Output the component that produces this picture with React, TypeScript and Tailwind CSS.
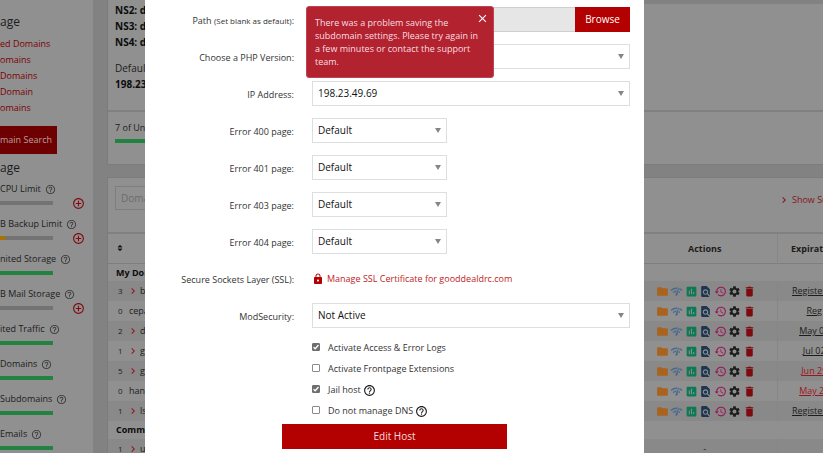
import React from "react";
import {
  MdAddCircleOutline,
  MdAssessment,
  MdChevronRight,
  MdClose,
  MdDelete,
  MdFindInPage,
  MdFolder,
  MdHelpOutline,
  MdHistory,
  MdLock,
  MdNetworkCheck,
  MdSettings,
} from "react-icons/md";
import { FaSort } from "react-icons/fa";

type Meter = { label: string; fill: string; bar: string; plus?: boolean };

const links = ["ed Domains", "omains", "Domains", "Domain", "omains"];

const meters: Meter[] = [
  { label: "CPU Limit", fill: "w-0", bar: "", plus: true },
  { label: "B Backup Limit", fill: "w-[5px]", bar: "bg-[#a87400]", plus: true },
  { label: "nited Storage", fill: "w-full", bar: "bg-[#22823f]" },
  { label: "B Mail Storage", fill: "w-0", bar: "", plus: true },
  { label: "ited Traffic", fill: "w-full", bar: "bg-[#22823f]" },
  { label: "Domains", fill: "w-full", bar: "bg-[#22823f]" },
  { label: "Subdomains", fill: "w-full", bar: "bg-[#22823f]" },
  { label: "Emails", fill: "w-full", bar: "bg-[#22823f]" },
];

type Host = { count: number; name: string; open: boolean; date: string; late?: boolean };

const hosts: Host[] = [
  { count: 3, name: "b", open: true, date: "Registered" },
  { count: 0, name: "cepa", open: false, date: "Reg" },
  { count: 2, name: "d", open: true, date: "May 05" },
  { count: 1, name: "g", open: true, date: "Jul 02" },
  { count: 5, name: "g", open: true, date: "Jun 29", late: true },
  { count: 0, name: "hand", open: false, date: "May 25", late: true },
  { count: 1, name: "ls", open: true, date: "Registered" },
];

const actions = [
  { label: "Files", icon: MdFolder, tint: "text-[#a8641f]" },
  { label: "Network", icon: MdNetworkCheck, tint: "text-[#4a6a8c]" },
  { label: "Statistics", icon: MdAssessment, tint: "text-[#0b7a55]" },
  { label: "Inspect", icon: MdFindInPage, tint: "text-[#1d3550]" },
  { label: "History", icon: MdHistory, tint: "text-[#9c1455]" },
  { label: "Settings", icon: MdSettings, tint: "text-[#1c1c1c]" },
  { label: "Delete", icon: MdDelete, tint: "text-[#7d0a0e]" },
];

function Sidebar() {
  return (
    <aside className="w-[93px] shrink-0 overflow-hidden whitespace-nowrap bg-[#909090] text-[9px] text-[#1c1c1c]">
      <h2 className="mt-3.5 text-[12px] leading-4">age</h2>
      <nav className="mt-1.5 flex flex-col text-[9px] leading-4 text-[#7c0006]">
        {links.map((link, i) => (
          <a key={i} href="#domains">{link}</a>
        ))}
      </nav>
      <button className="mt-2.5 h-7 w-[57px] bg-[#6e0002] text-left text-[9px] text-[#b9a0a0]">main Search</button>
      <h2 className="mt-1.5 text-[12px] leading-4">age</h2>
      <ul className="mt-1.5">
        {meters.map((m) => (
          <li key={m.label} className="h-[35px]">
            <div className="flex h-3.5 items-center gap-1">
              {m.label}
              <MdHelpOutline size={11} className="text-[#3c3c3c]" />
            </div>
            <div className="flex h-3.5 items-center">
              <div className="h-1 w-[53px] bg-[#737373]">
                <div className={`h-full ${m.fill} ${m.bar}`} />
              </div>
              {m.plus && (
                <button aria-label={`Increase ${m.label}`} className="ml-[19px] text-[#820a12]">
                  <MdAddCircleOutline size={13} />
                </button>
              )}
            </div>
          </li>
        ))}
      </ul>
    </aside>
  );
}

function CountCell({ count, name, open }: { count: number; name: string; open: boolean }) {
  return (
    <div className="flex items-center pl-2.5">
      <span className="w-[11px] text-[8px]">{count}</span>
      {open && <MdChevronRight size={12} className="-ml-0.5 mr-px text-[#96141c]" />}
      <span>{name}</span>
    </div>
  );
}

function HostTable() {
  return (
    <table className="w-[calc(100%+28px)] table-fixed border-t-2 border-[#808080] text-[9px] text-[#1c1c1c]">
      <thead>
        <tr className="h-[30px] border-b border-[#7e7e7e]">
          <th className="pl-2 text-left"><FaSort size={8} aria-label="Sort" /></th>
          <th className="w-36 border-r border-[#868686]">Actions</th>
          <th className="w-[74px]">Expiration</th>
        </tr>
      </thead>
      <tbody>
        <tr className="h-[18px]"><th colSpan={3} className="pl-2 text-left text-[#0c0c0c]">My Domains</th></tr>
        {hosts.map((h, i) => (
          <tr key={i} className="h-5 odd:bg-[#909090] even:bg-[#898989]">
            <td><CountCell {...h} /></td>
            <td className="border-r border-[#868686] pl-0.5">
              <div className="mx-auto flex w-[100px] justify-between">
                {actions.map(({ label, icon: Icon, tint }) => (
                  <button key={label} aria-label={label} className={tint}>
                    <Icon size={13} />
                  </button>
                ))}
              </div>
            </td>
            <td className="text-center">
              <a href="#expiration" className={h.late ? "text-[#a0141c] underline" : "underline"}>{h.date}</a>
            </td>
          </tr>
        ))}
        <tr className="h-[18px]"><th colSpan={3} className="pl-2 text-left text-[#0c0c0c]">Common</th></tr>
        <tr className="h-5 bg-[#898989]">
          <td><CountCell count={1} name="u" open /></td>
          <td className="border-r border-[#868686] text-center">-</td>
          <td />
        </tr>
      </tbody>
    </table>
  );
}

function Dashboard() {
  return (
    <main className="ml-3.5 min-w-0 flex-1 overflow-hidden text-[#1c1c1c]">
      <section className="border-b border-l border-[#7c7c7c] bg-[#909090]">
        <div className="flex h-[110px]">
          <div className="w-1/2 pl-[7px] pt-0.5 text-[10px] leading-4">
            <p className="font-bold text-[#0c0c0c]">NS2: d</p>
            <p className="font-bold text-[#0c0c0c]">NS3: d</p>
            <p className="font-bold text-[#0c0c0c]">NS4: d</p>
            <p className="mt-2.5">Default</p>
            <p className="font-bold text-[#0c0c0c]">198.23</p>
          </div>
          <div className="w-1/2 border-t-4 border-[#828282]" />
        </div>
        <div className="h-[54px] border-t-2 border-[#808080] pl-[7px] pt-[9px] text-[9px]">
          <p className="leading-[13px]">7 of Unlimited</p>
          <div className="mt-[5px] h-1 w-40 bg-[#22823f]" />
        </div>
      </section>
      <section className="mt-3 border-l border-t border-[#7c7c7c] bg-[#909090]">
        <div className="flex h-[54px] items-start justify-between pl-[7px] pt-2">
          <input
            aria-label="Domain search"
            placeholder="Domain"
            className="h-6 w-32 border border-[#7e7e7e] pl-[5px] text-[10px] placeholder:text-[#6c6c6c]"
          />
          <a href="#subdomains" className="mt-1 flex w-[45px] items-center gap-0.5 whitespace-nowrap text-[9px] leading-5 text-[#86141a]">
            <MdChevronRight size={12} className="shrink-0" />
            Show Subdomains
          </a>
        </div>
        <HostTable />
      </section>
    </main>
  );
}

function Row({ label, htmlFor, children }: { label: React.ReactNode; htmlFor?: string; children: React.ReactNode }) {
  return (
    <div className="flex h-[25px] items-center gap-[18px]">
      <label htmlFor={htmlFor} className="w-[149px] shrink-0 whitespace-nowrap pt-0.5 text-right">{label}</label>
      <div className="min-w-0 flex-1">{children}</div>
    </div>
  );
}

function Select({ id, value, short }: { id: string; value: string; short?: boolean }) {
  return (
    <div className={`relative ${short ? "w-[135px]" : "w-full"}`}>
      <select id={id} className="block h-[25px] w-full appearance-none border border-[#dcdee0] bg-white pl-[5px] text-[10px] font-medium text-[#111]">
        <option>{value}</option>
      </select>
      <svg viewBox="0 0 6 5" className="pointer-events-none absolute right-1.5 top-2.5 h-[5px] w-1.5 fill-[#858585]">
        <path d="M0 0h6L3 5z" />
      </svg>
    </div>
  );
}

function Check({ label, checked, help }: { label: string; checked?: boolean; help?: boolean }) {
  return (
    <div className="flex h-[21px] items-center">
      <label className="flex items-center gap-2">
        <span className="relative -mt-0.5 flex">
          <input
            type="checkbox"
            defaultChecked={checked}
            className="peer size-2 appearance-none rounded-[1px] border border-[#8a8a8a] bg-white checked:border-[#6e6e6e] checked:bg-[#6e6e6e]"
          />
          <svg viewBox="0 0 8 8" className="pointer-events-none absolute inset-0 hidden size-2 fill-none stroke-white stroke-[1.3] peer-checked:block">
            <path d="M1.5 4.2 3.2 5.8 6.5 2" />
          </svg>
        </span>
        {label}
      </label>
      {help && <MdHelpOutline size={13} className="ml-0.5 mt-0.5 text-[#1c1c1c]" />}
    </div>
  );
}

function Toast() {
  return (
    <div role="alert" className="absolute left-[161px] top-1.5 w-[188px] whitespace-nowrap rounded-[3px] border border-[#bf4450] bg-[#b3222f] px-2 py-[9px] leading-[13px] text-[#f7dfe1]">
      There was a problem saving the<br />
      subdomain settings. Please try again in<br />
      a few minutes or contact the support<br />
      team.
      <button aria-label="Close" className="absolute right-1 top-[5px] text-white">
        <MdClose size={13} />
      </button>
    </div>
  );
}

function HostDialog() {
  return (
    <div role="dialog" aria-label="Edit host" className="relative min-h-full flex-1 bg-white pr-3.5 pt-[7px] text-[9px] text-[#333]">
      <form className="flex flex-col gap-3" onSubmit={(e) => e.preventDefault()}>
        <Row htmlFor="path" label={<>Path <span className="text-[8px]">(Set blank as default)</span>:</>}>
          <div className="flex">
            <input id="path" className="h-[25px] min-w-0 flex-1 border border-r-0 border-[#cfcfcf] bg-[#e6e6e6]" />
            <button type="button" className="h-[25px] w-[55px] bg-[#b30000] text-[10px] font-medium text-white">Browse</button>
          </div>
        </Row>
        <Row htmlFor="php" label="Choose a PHP Version:"><Select id="php" value="" /></Row>
        <Row htmlFor="ip" label="IP Address:"><Select id="ip" value="198.23.49.69" /></Row>
        <Row htmlFor="e400" label="Error 400 page:"><Select id="e400" value="Default" short /></Row>
        <Row htmlFor="e401" label="Error 401 page:"><Select id="e401" value="Default" short /></Row>
        <Row htmlFor="e403" label="Error 403 page:"><Select id="e403" value="Default" short /></Row>
        <Row htmlFor="e404" label="Error 404 page:"><Select id="e404" value="Default" short /></Row>
        <Row label="Secure Sockets Layer (SSL):">
          <a href="#ssl" className="flex items-center gap-[3px] text-[#c01c24]">
            <MdLock size={12} className="text-[#b30000]" />
            Manage SSL Certificate for gooddealdrc.com
          </a>
        </Row>
        <Row htmlFor="mod" label="ModSecurity:"><Select id="mod" value="Not Active" /></Row>
        <div className="-mt-[3px] pl-[167px]">
          <Check label="Activate Access & Error Logs" checked />
          <Check label="Activate Frontpage Extensions" />
          <Check label="Jail host" checked help />
          <Check label="Do not manage DNS" help />
        </div>
        <button type="submit" className="-mt-[9px] ml-[137px] h-[25px] w-[225px] bg-[#b30000] text-[10px] text-[#f5dede]">Edit Host</button>
      </form>
      <Toast />
    </div>
  );
}

export default function App() {
  return (
    <div className="relative h-screen overflow-hidden bg-[#828282] font-['Open_Sans','Noto_Sans',sans-serif]">
      <div className="flex h-full">
        <Sidebar />
        <Dashboard />
      </div>
      <div className="absolute inset-0 flex pl-[145px] pr-[179px]">
        <HostDialog />
      </div>
    </div>
  );
}
